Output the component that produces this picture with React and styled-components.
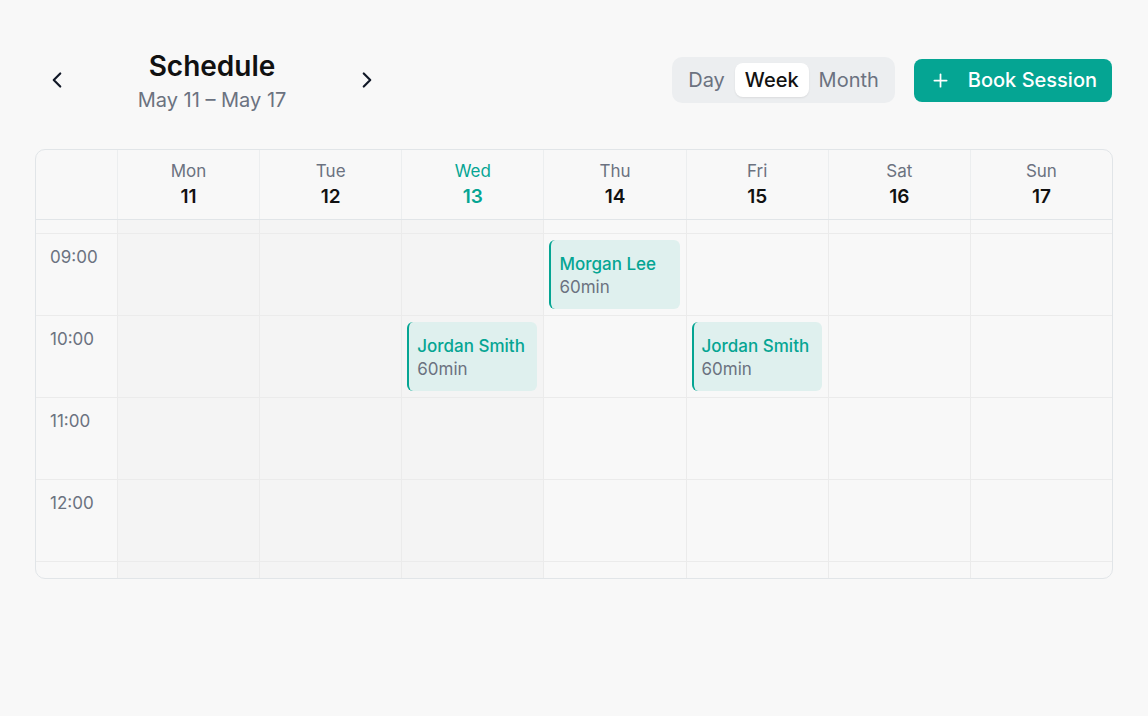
import React, { useState } from 'react';
import styled, { createGlobalStyle } from 'styled-components';
import { ChevronLeft, ChevronRight, Plus } from 'lucide-react';

const GlobalStyle = createGlobalStyle`
  html, body {
    margin: 0;
    padding: 0;
    background: #f8f8f8;
  }
  body {
    font-family: Inter, "Noto Sans", "Liberation Sans", sans-serif;
    color: #111827;
    -webkit-font-smoothing: antialiased;
  }
`;

const Page = styled.div`
  box-sizing: border-box;
  width: 1148px;
  min-height: 716px;
  padding: 46px 35px 0;
`;

const Header = styled.div`
  display: flex;
  align-items: center;
  justify-content: space-between;
  height: 68px;
`;

const Nav = styled.div`
  display: flex;
  align-items: center;
  gap: 12px;
  margin-left: 4px;
`;

const NavButton = styled.button`
  display: flex;
  align-items: center;
  justify-content: center;
  width: 36px;
  height: 36px;
  padding: 0;
  border: none;
  background: transparent;
  color: #111827;
  cursor: pointer;
  border-radius: 8px;
`;

const TitleBlock = styled.div`
  width: 250px;
  display: flex;
  flex-direction: column;
  align-items: center;
`;

const Title = styled.h1`
  margin: 0;
  font-size: 28px;
  line-height: 34px;
  font-weight: 600;
  color: #111111;
`;

const Subtitle = styled.div`
  font-size: 20px;
  line-height: 24px;
  margin-top: 5px;
  color: #6b7280;
`;

const Actions = styled.div`
  display: flex;
  align-items: center;
  gap: 19px;
  margin-right: 1px;
`;

const Segmented = styled.div`
  display: flex;
  align-items: center;
  gap: 0;
  padding: 6px;
  background: #eceef0;
  border-radius: 10px;
`;

const Segment = styled.button`
  border: none;
  font-family: inherit;
  font-size: 20px;
  line-height: 24px;
  padding: 5px 10px;
  border-radius: 8px;
  cursor: pointer;
  background: ${p => (p.$active ? '#ffffff' : 'transparent')};
  color: ${p => (p.$active ? '#111111' : '#6b7280')};
  font-weight: ${p => (p.$active ? 500 : 400)};
  box-shadow: ${p => (p.$active ? '0 1px 2px rgba(0,0,0,0.08)' : 'none')};
`;

const PrimaryButton = styled.button`
  display: flex;
  align-items: center;
  gap: 17px;
  height: 43px;
  padding: 0 15px 0 16px;
  border: none;
  border-radius: 8px;
  background: #05a593;
  color: #ffffff;
  font-family: inherit;
  font-size: 20px;
  font-weight: 500;
  cursor: pointer;
`;

const Card = styled.div`
  margin-top: 35px;
  border: 1px solid #e1e5e8;
  border-radius: 10px;
  overflow: hidden;
  background: #f8f8f8;
`;

const Grid = styled.div`
  box-sizing: border-box;
  display: grid;
  grid-template-columns: 81px repeat(7, 1fr);
`;

const HeadRow = styled(Grid)`
  height: 70px;
  border-bottom: 1px solid #e1e5e8;
`;

const HeadCell = styled.div`
  display: flex;
  flex-direction: column;
  align-items: center;
  justify-content: center;
  border-left: 1px solid #eceeef;
  color: ${p => (p.$today ? '#05a593' : '#111111')};
`;

const DayName = styled.div`
  font-size: 17px;
  line-height: 22px;
  color: ${p => (p.$today ? '#05a593' : '#6b7280')};
`;

const DayNum = styled.div`
  font-size: 19px;
  line-height: 26px;
  font-weight: 600;
  margin-top: 2px;
`;

const BodyRow = styled(Grid)`
  height: ${p => p.$h}px;
  border-top: ${p => (p.$first ? 'none' : '1px solid #ebebeb')};
`;

const TimeCell = styled.div`
  box-sizing: border-box;
  padding: 12px 0 0 14px;
  font-size: 17px;
  line-height: 22px;
  color: #6b7280;
`;

const DayCell = styled.div`
  box-sizing: border-box;
  border-left: 1px solid #ebebeb;
  background: ${p => (p.$past ? '#f4f4f4' : 'transparent')};
  padding: 6px 6px 6px 5px;
  display: flex;
`;

const Event = styled.div`
  flex: 1;
  box-sizing: border-box;
  background: #dff0ee;
  border-left: 2px solid #05a593;
  border-radius: 6px;
  padding: 13px 8px 0;
`;

const EventName = styled.div`
  font-size: 17px;
  line-height: 23px;
  font-weight: 500;
  color: #05a593;
`;

const EventMeta = styled.div`
  font-size: 17px;
  line-height: 23px;
  color: #6b7280;
`;

const days = [
  { name: 'Mon', num: 11 },
  { name: 'Tue', num: 12 },
  { name: 'Wed', num: 13, today: true },
  { name: 'Thu', num: 14 },
  { name: 'Fri', num: 15 },
  { name: 'Sat', num: 16 },
  { name: 'Sun', num: 17 },
];

const hours = ['09:00', '10:00', '11:00', '12:00'];

const sessions = [
  { day: 3, hour: '09:00', name: 'Morgan Lee', duration: 60 },
  { day: 2, hour: '10:00', name: 'Jordan Smith', duration: 60 },
  { day: 4, hour: '10:00', name: 'Jordan Smith', duration: 60 },
];

const todayIndex = 2;

function SpacerRow({ height, first }) {
  return (
    <BodyRow $h={height} $first={first}>
      <TimeCell />
      {days.map((d, i) => (
        <DayCell key={d.name} $past={i <= todayIndex} />
      ))}
    </BodyRow>
  );
}

export default function App() {
  const [view, setView] = useState('Week');

  return (
    <>
      <GlobalStyle />
      <Page>
        <Header>
          <Nav>
            <NavButton aria-label="Previous week">
              <ChevronLeft size={26} strokeWidth={2} />
            </NavButton>
            <TitleBlock>
              <Title>Schedule</Title>
              <Subtitle>May 11 – May 17</Subtitle>
            </TitleBlock>
            <NavButton aria-label="Next week">
              <ChevronRight size={26} strokeWidth={2} />
            </NavButton>
          </Nav>
          <Actions>
            <Segmented>
              {['Day', 'Week', 'Month'].map(v => (
                <Segment key={v} $active={view === v} onClick={() => setView(v)}>
                  {v}
                </Segment>
              ))}
            </Segmented>
            <PrimaryButton>
              <Plus size={21} strokeWidth={2} />
              Book Session
            </PrimaryButton>
          </Actions>
        </Header>

        <Card>
          <HeadRow>
            <div />
            {days.map(d => (
              <HeadCell key={d.name} $today={d.today}>
                <DayName $today={d.today}>{d.name}</DayName>
                <DayNum>{d.num}</DayNum>
              </HeadCell>
            ))}
          </HeadRow>

          <SpacerRow height={13} first />
          {hours.map(h => (
            <BodyRow key={h} $h={82}>
              <TimeCell>{h}</TimeCell>
              {days.map((d, i) => {
                const s = sessions.find(x => x.day === i && x.hour === h);
                return (
                  <DayCell key={d.name} $past={i <= todayIndex}>
                    {s && (
                      <Event>
                        <EventName>{s.name}</EventName>
                        <EventMeta>{s.duration}min</EventMeta>
                      </Event>
                    )}
                  </DayCell>
                );
              })}
            </BodyRow>
          ))}
          <SpacerRow height={17} />
        </Card>
      </Page>
    </>
  );
}
